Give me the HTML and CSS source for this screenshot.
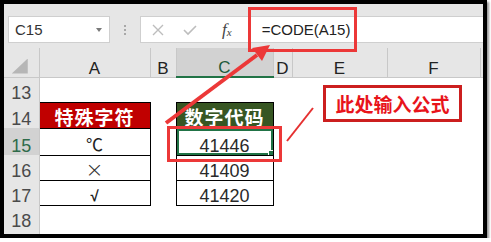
FILE: index.html
```html
<!DOCTYPE html>
<html lang="zh">
<head>
    <meta charset="UTF-8">
    <title>CODE 函数</title>
    <link rel="stylesheet" href="styles.css">
</head>
<body>
    <div class="window">
        <!-- 名称框 + 编辑栏 -->
        <div class="toolbar">
            <div class="namebox">
                <span class="ref">C15</span>
                <span class="caret"></span>
            </div>
            <div class="grip"><i></i><i></i><i></i></div>
            <div class="formula">
                <svg class="ico" width="12" height="12" viewBox="0 0 12 12">
                    <path d="M1 1 L11 11 M11 1 L1 11" stroke="#bdbdbd" stroke-width="1.4" fill="none"/>
                </svg>
                <svg class="ico ok" width="14" height="12" viewBox="0 0 14 12">
                    <path d="M1 6 L5 10 L13 2" stroke="#bdbdbd" stroke-width="1.6" fill="none"/>
                </svg>
                <span class="fx">f<sub>x</sub></span>
                <span class="ftext">=CODE(A15)</span>
            </div>
        </div>

        <!-- 工作表 -->
        <table class="sheet">
            <colgroup>
                <col style="width:35px">
                <col style="width:111px">
                <col style="width:26px">
                <col style="width:97px">
                <col style="width:19px">
                <col style="width:95px">
                <col style="width:93px">
                <col style="width:7px">
            </colgroup>
            <tr class="hrow">
                <th class="corner"><span class="tri"></span></th>
                <th>A</th>
                <th>B</th>
                <th class="sel">C</th>
                <th>D</th>
                <th>E</th>
                <th>F</th>
                <th class="edge"></th>
            </tr>
            <tr class="r25">
                <th class="rh">13</th>
                <td></td><td></td><td></td><td></td><td></td><td></td><td></td>
            </tr>
            <tr class="r26">
                <th class="rh">14</th>
                <td class="box title-red">特殊字符</td><td></td>
                <td class="box title-green">数字代码</td>
                <td></td><td></td><td></td><td></td>
            </tr>
            <tr class="r27">
                <th class="rh rh-sel">15</th>
                <td class="box sym">℃</td><td></td>
                <td class="box num active">41446</td>
                <td></td><td></td><td></td><td></td>
            </tr>
            <tr class="r25">
                <th class="rh">16</th>
                <td class="box times">×</td><td></td>
                <td class="box num">41409</td>
                <td></td><td></td><td></td><td></td>
            </tr>
            <tr class="r25">
                <th class="rh">17</th>
                <td class="box check">√</td><td></td>
                <td class="box num">41420</td>
                <td></td><td></td><td></td><td></td>
            </tr>
            <tr class="r25">
                <th class="rh">18</th>
                <td></td><td></td><td></td><td></td><td></td><td></td><td></td>
            </tr>
            <tr class="r4">
                <th class="rh"></th>
                <td></td><td></td><td></td><td></td><td></td><td></td><td></td>
            </tr>
        </table>
    </div>

    <!-- 标注：红框与箭头 -->
    <svg class="marks" width="491" height="242" viewBox="0 0 491 242">
        <rect x="249.5" y="8.5" width="106" height="42" fill="none" stroke="#ec3838" stroke-width="3"/>
        <rect x="168.5" y="127.5" width="112" height="33" fill="none" stroke="#ec3838" stroke-width="3"/>
        <line x1="166" y1="123" x2="257" y2="55" stroke="#ec3838" stroke-width="4"/>
        <polygon points="270,45 262,61 252,48" fill="#ec3838"/>
        <line x1="287" y1="141" x2="313" y2="108" stroke="#e53030" stroke-width="2"/>
    </svg>
    <div class="note">此处输入公式</div>
</body>
</html>
```

FILE: styles.css
```css
/* 基础 */
body {
    margin: 0;
    background-color: #ffffff;
    font-family: "Liberation Sans", "Noto Sans CJK SC", sans-serif;
}

.window {
    width: 487px;
    height: 238px;
    box-sizing: border-box;
    border: 4px solid #000;
    background-color: #fff;
    box-shadow: 2px 2px 2px #9a9a9a;
    overflow: hidden;
}

/* 编辑栏 */
.toolbar {
    display: flex;
    align-items: center;
    height: 44px;
    padding: 7px 0 0 4px;
    box-sizing: border-box;
    background-color: #e6e6e6;
}

.namebox {
    display: flex;
    align-items: center;
    justify-content: space-between;
    width: 102px;
    height: 27px;
    box-sizing: border-box;
    padding: 0 7px 0 6px;
    background-color: #fff;
    border: 1px solid #cfcfcf;
}

.ref {
    font-size: 15px;
    color: #333;
}

.caret {
    width: 0;
    height: 0;
    border-left: 3.5px solid transparent;
    border-right: 3.5px solid transparent;
    border-top: 4px solid #7a7a7a;
}

.grip {
    display: flex;
    flex-direction: column;
    gap: 2px;
    margin-left: 14px;
    width: 2px;
}

.grip i {
    width: 2px;
    height: 2px;
    background-color: #a8a8a8;
}

.formula {
    flex: 1;
    display: flex;
    align-items: center;
    height: 27px;
    margin-left: 14px;
    box-sizing: border-box;
    background-color: #fff;
    border: 1px solid #cfcfcf;
    border-right: none;
}

.ico {
    margin-left: 11px;
}

.ico.ok {
    margin-left: 19px;
}

.fx {
    margin-left: 25px;
    font-family: "Liberation Serif", serif;
    font-style: italic;
    font-size: 17px;
    color: #444;
}

.fx sub {
    font-size: 11px;
    vertical-align: -1px;
}

.ftext {
    margin-left: 30px;
    font-size: 15px;
    color: #222;
}

/* 工作表 */
.sheet {
    width: 483px;
    table-layout: fixed;
    border-collapse: collapse;
}

.sheet th,
.sheet td {
    padding: 0;
    text-align: center;
    vertical-align: bottom;
    overflow: hidden;
    white-space: nowrap;
}

.hrow {
    height: 29px;
}

.hrow th {
    background-color: #e6e6e6;
    border-right: 1px solid #c8c8c8;
    border-bottom: 1px solid #c8c8c8;
    font-weight: normal;
    font-size: 17px;
    color: #222;
    line-height: 16px;
}

.hrow th.sel {
    background-color: #d2d2d2;
    border-bottom: 2px solid #217346;
    color: #215a3a;
}

.hrow th.edge {
    border-right: none;
}

.corner {
    text-align: right;
}

.tri {
    display: inline-block;
    width: 16px;
    height: 15px;
    margin: 0 3px 3px 0;
    background-color: #b6b6b6;
    clip-path: polygon(100% 0, 100% 100%, 0 100%);
    vertical-align: bottom;
}

.r25 { height: 25px; }
.r26 { height: 26px; }
.r27 { height: 27px; }
.r4 { height: 4px; }

.rh {
    background-color: #e6e6e6;
    border-right: 1px solid #c8c8c8;
    font-weight: normal;
    font-size: 18px;
    line-height: 17px;
    color: #4a4a4a;
}

.rh-sel {
    background-color: #d2d2d2;
    color: #2f6b4a;
}

/* 数据区域 */
.box {
    border: 1px solid #000;
    font-size: 17px;
    line-height: 18px;
    color: #222;
}

.num {
    font-size: 18px;
    line-height: 17px;
    color: #2a2a2a;
}

.sym {
    font-family: "Noto Sans CJK SC", sans-serif;
    font-size: 17px;
    line-height: 22px;
}

.times {
    font-family: "DejaVu Sans", sans-serif;
    font-size: 22px;
    line-height: 21px;
    font-weight: 200;
    color: #333;
}

.check {
    font-weight: bold;
    font-size: 15px;
    line-height: 19px;
}

.title-red,
.title-green {
    font-family: "Noto Sans CJK SC", sans-serif;
    font-weight: bold;
    font-size: 19px;
    color: #fff;
    letter-spacing: 1px;
    line-height: 23px;
}

.title-red {
    background-color: #c00000;
}

.title-green {
    background-color: #375623;
}

.active {
    position: relative;
    box-shadow: inset 0 0 0 2px #217346;
}

.active::after {
    content: "";
    position: absolute;
    right: -2px;
    bottom: -2px;
    width: 5px;
    height: 5px;
    background-color: #217346;
    border: 1px solid #fff;
}

/* 标注 */
.marks {
    position: absolute;
    top: 0;
    left: 0;
    pointer-events: none;
}

.note {
    position: absolute;
    left: 323px;
    top: 85px;
    width: 139px;
    height: 37px;
    box-sizing: border-box;
    border: 3px solid #cc1f1f;
    background-color: #fff;
    display: flex;
    align-items: center;
    justify-content: center;
    font-family: "Noto Sans CJK SC", sans-serif;
    font-weight: bold;
    font-size: 19px;
    color: #e8141b;
}
```
